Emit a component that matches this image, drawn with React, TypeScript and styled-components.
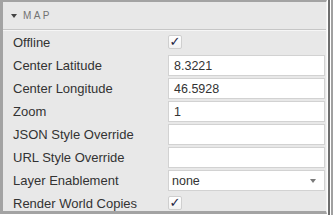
import React from "react";
import styled, { createGlobalStyle } from "styled-components";

const GlobalStyle = createGlobalStyle`
  html, body {
    margin: 0;
    padding: 0;
    background: #ffffff;
  }
  body {
    font-family: "Liberation Sans", Arial, sans-serif;
  }
`;

const Frame = styled.div`
  display: flex;
  width: 336px;
  height: 217px;
  background: #ffffff;
`;

const Panel = styled.section`
  width: 323px;
  height: 209px;
  background: #e8e8e8;
  border-top: 2px solid #a3a3a3;
  border-left: 3px solid #a3a3a3;
  border-bottom: 3px solid #a3a3a3;
  border-right: 1px solid #f4f4f4;
  display: flex;
  flex-direction: column;
  overflow: hidden;
`;

const Rail = styled.div`
  display: flex;
  gap: 1px;
  margin-left: 1px;
  height: 215px;
`;

const RailLine = styled.div<{ $tone: string }>`
  width: 2px;
  background: ${(p) => p.$tone};
`;

const Header = styled.header`
  flex-shrink: 0;
  height: 27px;
  display: flex;
  align-items: center;
  gap: 6px;
  padding-left: 8px;
  border-bottom: 1px solid #c6c6c6;
  box-shadow: 0 1px 0 #f6f6f6;
`;

const Caret = styled.span`
  width: 0;
  height: 0;
  border-left: 3.5px solid transparent;
  border-right: 3.5px solid transparent;
  border-top: 4px solid #444;
`;

const Title = styled.span`
  font-size: 10px;
  letter-spacing: 2.4px;
  color: #727272;
`;

const Body = styled.div`
  flex-shrink: 0;
  display: flex;
  flex-direction: column;
  padding-top: 1px;
`;

const Row = styled.div`
  flex-shrink: 0;
  height: 23px;
  display: grid;
  grid-template-columns: 155px 157px;
  align-items: center;
  padding-left: 10px;
`;

const Label = styled.span`
  font-size: 13px;
  color: #333333;
  white-space: nowrap;
`;

const Field = styled.div<{ $select?: boolean }>`
  height: 19px;
  background: #ffffff;
  border: 1px solid #d2d2d2;
  display: flex;
  align-items: center;
  justify-content: space-between;
  padding: 0 8px 0 ${(p) => (p.$select ? "3px" : "5px")};
  font-size: 12.5px;
  color: #333333;
`;

const SelectCaret = styled.span`
  width: 0;
  height: 0;
  border-left: 3.5px solid transparent;
  border-right: 3.5px solid transparent;
  border-top: 4px solid #7a7a7a;
`;

const Check = styled.span`
  width: 12px;
  height: 12px;
  margin-top: -2px;
  border: 1px solid #cfcfcf;
  border-radius: 2px;
  background: linear-gradient(#ffffff, #f2f2f2);
  display: flex;
  align-items: center;
  justify-content: center;
  font-family: "DejaVu Sans", sans-serif;
  font-size: 13px;
  line-height: 1;
  color: #1b2440;
`;

type Item =
  | { label: string; kind: "check" }
  | { label: string; kind: "text"; value: string }
  | { label: string; kind: "select"; value: string };

const items: Item[] = [
  { label: "Offline", kind: "check" },
  { label: "Center Latitude", kind: "text", value: "8.3221" },
  { label: "Center Longitude", kind: "text", value: "46.5928" },
  { label: "Zoom", kind: "text", value: "1" },
  { label: "JSON Style Override", kind: "text", value: "" },
  { label: "URL Style Override", kind: "text", value: "" },
  { label: "Layer Enablement", kind: "select", value: "none" },
  { label: "Render World Copies", kind: "check" },
];

export default function App() {
  return (
    <>
      <GlobalStyle />
      <Frame>
        <Panel>
          <Header>
            <Caret />
            <Title>MAP</Title>
          </Header>
          <Body>
            {items.map((item) => (
              <Row key={item.label}>
                <Label>{item.label}</Label>
                {item.kind === "check" && <Check>✓</Check>}
                {item.kind === "text" && <Field>{item.value}</Field>}
                {item.kind === "select" && (
                  <Field $select>
                    {item.value}
                    <SelectCaret />
                  </Field>
                )}
              </Row>
            ))}
          </Body>
        </Panel>
        <Rail>
          <RailLine $tone="#6e6e6e" />
          <RailLine $tone="#a0a0a0" />
        </Rail>
      </Frame>
    </>
  );
}
